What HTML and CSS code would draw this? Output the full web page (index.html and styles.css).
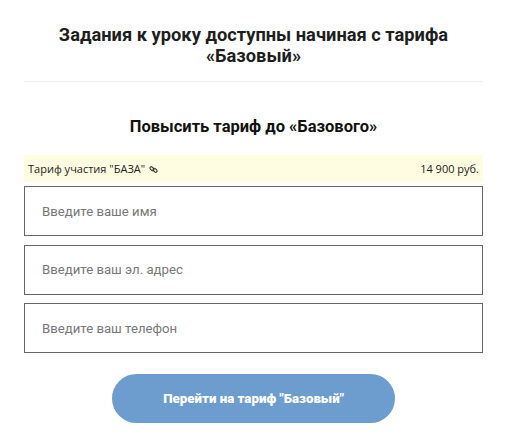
FILE: index.html
```html
<!DOCTYPE html>
<html>
<head>
    <title>Повысить тариф</title>
    <link rel="stylesheet" href="styles.css">
</head>
<body>
    <div class="container">
        <h1 class="title">Задания к уроку доступны начиная с тарифа «Базовый»</h1>
        <div class="divider"></div>
        <h2 class="subtitle">Повысить тариф до «Базового»</h2>

        <div class="tariff">
            <span>Тариф участия "БАЗА"
                <svg class="link" width="9" height="9" viewBox="0 0 10 10">
                    <rect x="0.8" y="2.6" width="5" height="3" rx="1.5" transform="rotate(45 3.3 4.1)"/>
                    <rect x="4.2" y="4.4" width="5" height="3" rx="1.5" transform="rotate(45 6.7 5.9)"/>
                </svg>
            </span>
            <span>14 900 руб.</span>
        </div>

        <form class="form" onsubmit="return false">
            <input class="field" type="text" placeholder="Введите ваше имя">
            <input class="field" type="email" placeholder="Введите ваш эл. адрес">
            <input class="field" type="tel" placeholder="Введите ваш телефон">
            <button class="submit" type="submit">Перейти на тариф "Базовый"</button>
        </form>
    </div>
</body>
</html>
```

FILE: styles.css
```css
body {
    margin: 0;
    background: white;
    font-family: Roboto, "Liberation Sans", Arial, sans-serif;
    color: #222;
}
.container {
    padding: 24px 24px 0;
}
.title {
    margin: 0 auto;
    width: 420px;
    font-size: 18.3px;
    line-height: 21px;
    font-weight: bold;
    text-align: center;
    color: #1e1e1e;
}
.divider {
    height: 1px;
    background: #efefef;
    margin-top: 15px;
}
.subtitle {
    margin: 35px 0 0;
    font-size: 16.5px;
    line-height: 20px;
    font-weight: bold;
    text-align: center;
    color: #111;
}
.tariff {
    display: flex;
    justify-content: space-between;
    align-items: center;
    margin-top: 18px;
    height: 27px;
    padding: 0 4px;
    background: #fefde2;
    font-family: "Open Sans", Arial, sans-serif;
    font-size: 11px;
    color: #222;
}
.link {
    vertical-align: -1px;
    margin-left: 1px;
    fill: none;
    stroke: #333;
    stroke-width: 1.2;
}
.form {
    display: flex;
    flex-direction: column;
    gap: 8.5px;
    margin-top: 4px;
}
.field {
    box-sizing: border-box;
    height: 50px;
    width: 100%;
    margin: 0;
    padding: 0 17px;
    border: 1px solid #666;
    border-radius: 0;
    font-family: Roboto, Arial, sans-serif;
    font-size: 13.2px;
    color: #333;
    outline: none;
}
.field::placeholder {
    color: #777;
}
.submit {
    align-self: center;
    margin-top: 12.5px;
    width: 283px;
    height: 49px;
    border: none;
    border-radius: 25px;
    background: #6d9dcf;
    color: white;
    font-family: Roboto, Arial, sans-serif;
    font-size: 13.3px;
    font-weight: 900;
    cursor: pointer;
}
```
